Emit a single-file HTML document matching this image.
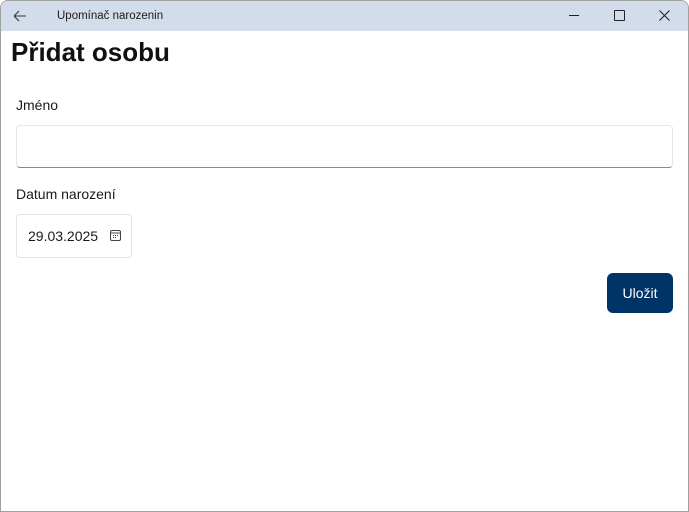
<!DOCTYPE html>
<html><head><meta charset="utf-8"><style>
body{margin:0;width:689px;height:512px;overflow:hidden;font-family:"Liberation Sans","DejaVu Sans",sans-serif;background:#fff}
.win{position:absolute;left:0;top:0;width:687px;height:510px;border:1px solid #a0a0a0;border-radius:8px 8px 0 0;overflow:hidden;background:#fff}
.tb{position:absolute;left:0;top:0;width:100%;height:30px;background:#d3dcea}
.t{position:absolute;font-size:12px;color:#1a1a1a}
.lbl{position:absolute;left:15px;font-size:14px;color:#1a1a1a}
</style></head><body><div class="win">
<div class="tb">
<svg style="position:absolute;left:12px;top:9px" width="14" height="12"><path d="M1 6H13M1 6L6 1M1 6L6 11" stroke="#333" stroke-width="1.1" fill="none"/></svg>
<div class="t" style="left:56px;top:9px;font-size:11.5px">Upomínač narozenin</div>
<div style="position:absolute;left:568px;top:14px;width:10px;height:1px;background:#222"></div>
<div style="position:absolute;left:613px;top:9px;width:9px;height:9px;border:1px solid #222;border-radius:1px"></div>
<svg style="position:absolute;left:658px;top:9px" width="11" height="11"><path d="M0.5 0.5L10.5 10.5M10.5 0.5L0.5 10.5" stroke="#222" stroke-width="1.1"/></svg>
</div>
<div style="position:absolute;left:10px;top:36px;font-size:26px;font-weight:bold;color:#111">Přidat osobu</div>
<div class="lbl" style="top:96px">Jméno</div>
<div style="position:absolute;left:15px;top:124px;height:43px;border:1px solid #e6e6e6;border-bottom:1px solid #8a8a8a;border-radius:4px;box-sizing:border-box;width:657px"></div>
<div class="lbl" style="top:185px">Datum narození</div>
<div style="position:absolute;left:15px;top:213px;width:116px;height:44px;border:1px solid #e3e3e3;border-radius:4px;box-sizing:border-box"></div>
<div style="position:absolute;left:27px;top:227px;font-size:14px;color:#1a1a1a">29.03.2025</div>
<svg style="position:absolute;left:109px;top:229px" width="11" height="11"><rect x="0.5" y="0.5" width="10" height="10" rx="1.5" fill="none" stroke="#444"/><path d="M1 3H10" stroke="#444"/><path d="M3 5.5h1M5 5.5h1M7 5.5h1M3 7.5h1M5 7.5h1" stroke="#444"/></svg>
<div style="position:absolute;left:606px;top:272px;width:66px;height:40px;background:#003366;border-radius:6px;color:#fff;font-size:14px;text-align:center;line-height:40px">Uložit</div>
</div></body></html>
